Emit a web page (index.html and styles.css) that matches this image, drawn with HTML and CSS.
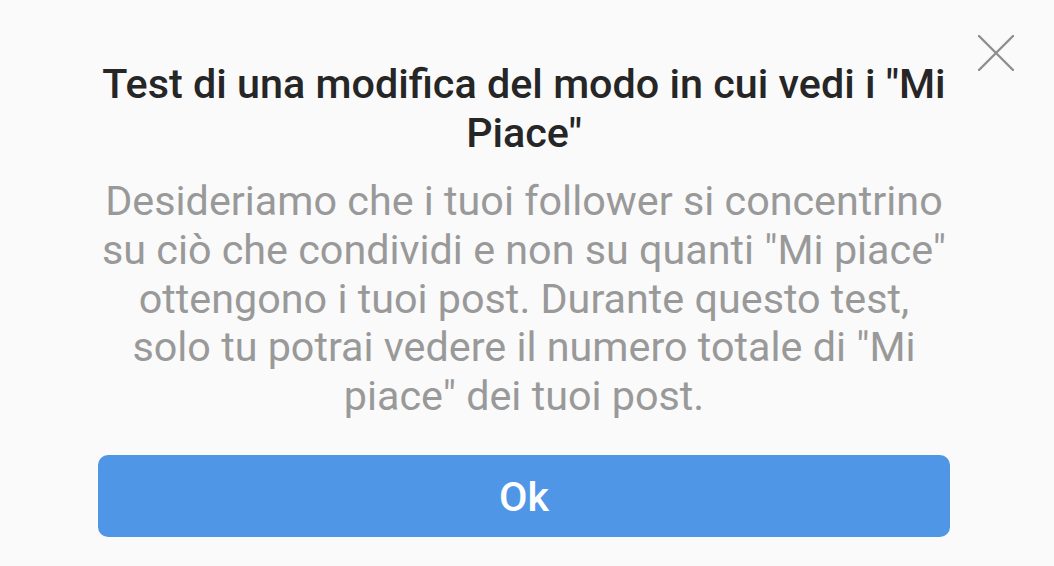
FILE: index.html
```html
<!DOCTYPE html>
<html lang="it">
<head>
<meta charset="utf-8">
<link rel="stylesheet" href="styles.css">
</head>
<body>
<div class="dialog">
  <button class="close" aria-label="Chiudi">
    <svg width="36" height="36" viewBox="0 0 36 36"><path d="M1 1 L35 35 M35 1 L1 35" stroke="#8e8e8e" stroke-width="2.4" stroke-linecap="round" fill="none"/></svg>
  </button>
  <div class="content">
    <h1 class="title">Test di una modifica del modo in cui vedi i "Mi Piace"</h1>
    <p class="text">Desideriamo che i tuoi follower si concentrino su ciò che condividi e non su quanti "Mi piace" ottengono i tuoi post. Durante questo test, solo tu potrai vedere il numero totale di "Mi piace" dei tuoi post.</p>
    <button class="ok">Ok</button>
  </div>
</div>
</body>
</html>
```

FILE: styles.css
```css
html, body {
  margin: 0;
  padding: 0;
  background: #fafafa;
  font-family: Roboto, "Noto Sans", sans-serif;
}
.dialog {
  position: relative;
  width: 1054px;
  height: 566px;
  overflow: hidden;
}
.close {
  position: absolute;
  top: 35px;
  left: 978px;
  width: 36px;
  height: 36px;
  padding: 0;
  border: 0;
  background: none;
}
.close svg { display: block; }
.content {
  width: 852px;
  margin-left: 98px;
  padding-top: 60px;
  display: flex;
  flex-direction: column;
  align-items: stretch;
}
.title {
  margin: 0 -4px;
  font-size: 41.3px;
  line-height: 49px;
  font-weight: 500;
  color: #262626;
  text-align: center;
}
.text {
  margin: 19px 0 0;
  font-size: 41.3px;
  line-height: 48.75px;
  font-weight: 400;
  color: #999999;
  text-align: center;
}
.ok {
  margin-top: 34px;
  height: 82px;
  border: 0;
  border-radius: 10px;
  background: #4f96e6;
  color: #ffffff;
  font-family: Roboto, "Noto Sans", sans-serif;
  font-size: 41.3px;
  font-weight: 500;
  padding: 2px 0 0;
}
```
